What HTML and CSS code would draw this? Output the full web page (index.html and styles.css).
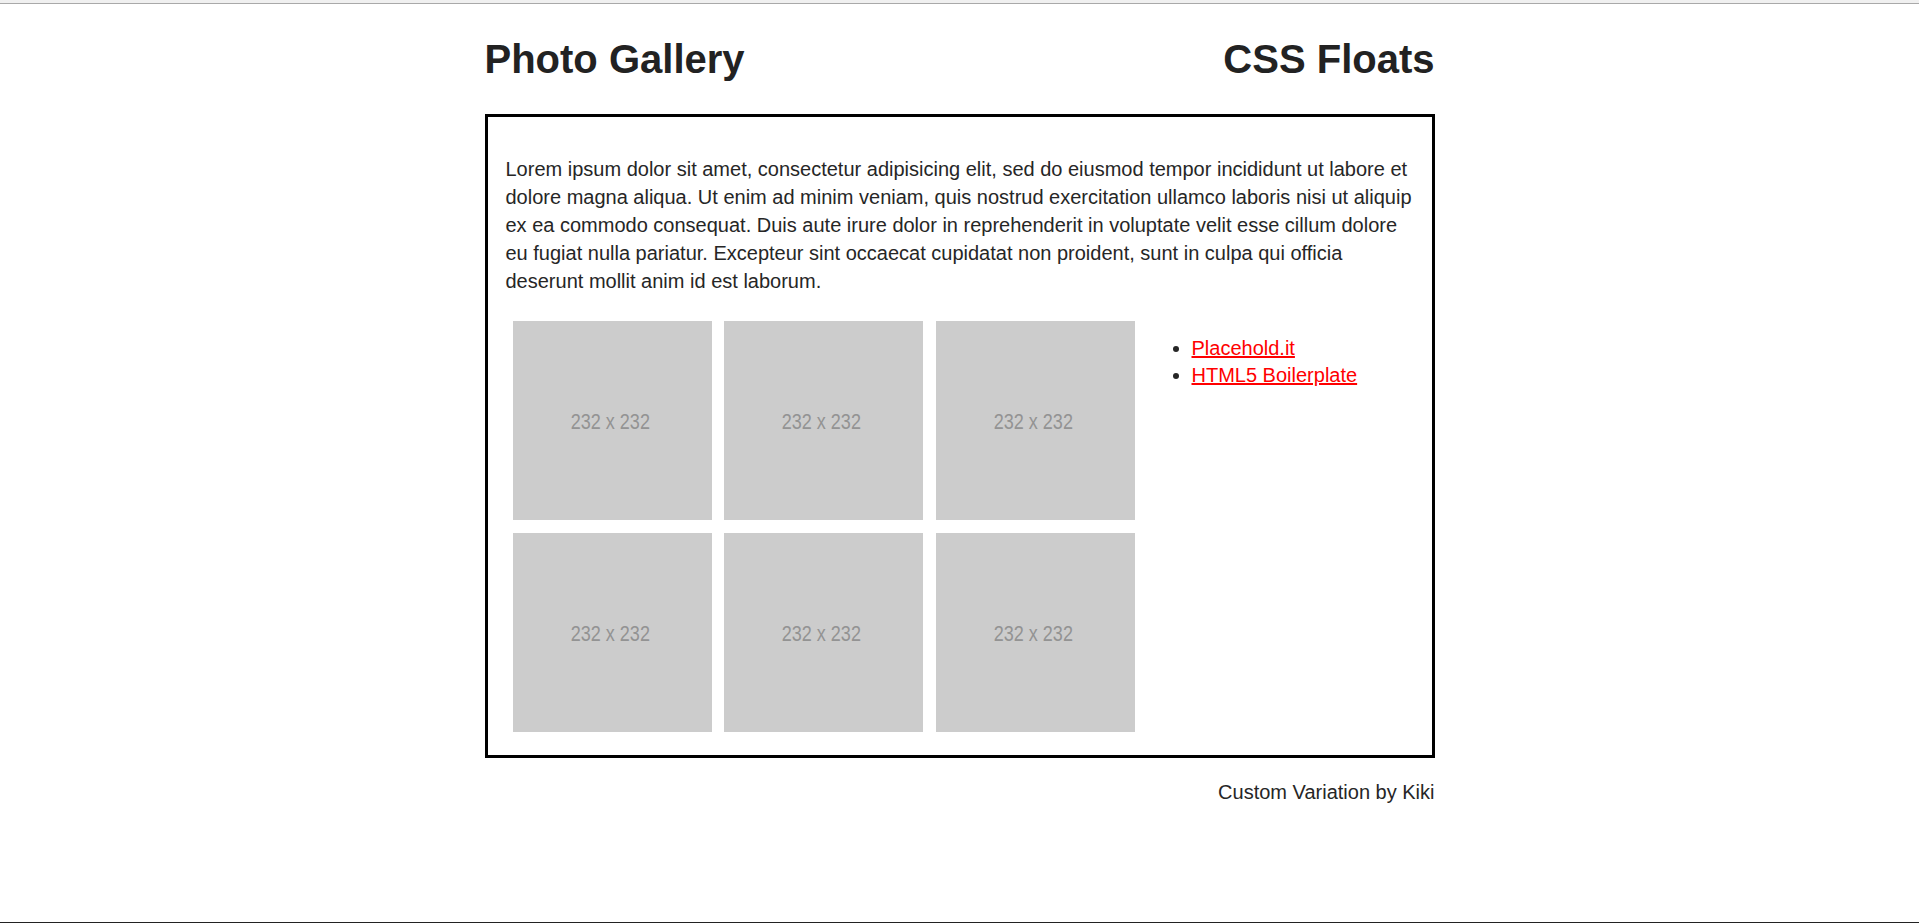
FILE: index.html
```html
<!DOCTYPE html>
<html lang="en">
<head>
<meta charset="utf-8">
<title>Photo Gallery - CSS Floats</title>
<link rel="stylesheet" href="styles.css">
</head>
<body>
<div class="topbar"></div>
<div class="container">
  <header class="header">
    <h1 class="title">Photo Gallery</h1>
    <h1 class="title">CSS Floats</h1>
  </header>
  <main class="box">
    <p class="intro">Lorem ipsum dolor sit amet, consectetur adipisicing elit, sed do eiusmod tempor incididunt ut labore et dolore magna aliqua. Ut enim ad minim veniam, quis nostrud exercitation ullamco laboris nisi ut aliquip ex ea commodo consequat. Duis aute irure dolor in reprehenderit in voluptate velit esse cillum dolore eu fugiat nulla pariatur. Excepteur sint occaecat cupidatat non proident, sunt in culpa qui officia deserunt mollit anim id est laborum.</p>
    <div class="content">
      <div class="gallery">
        <div class="photo"><span class="photo-label">232 x 232</span></div>
        <div class="photo"><span class="photo-label">232 x 232</span></div>
        <div class="photo"><span class="photo-label">232 x 232</span></div>
        <div class="photo"><span class="photo-label">232 x 232</span></div>
        <div class="photo"><span class="photo-label">232 x 232</span></div>
        <div class="photo"><span class="photo-label">232 x 232</span></div>
      </div>
      <aside class="sidebar">
        <ul class="links">
          <li><a href="#">Placehold.it</a></li>
          <li><a href="#">HTML5 Boilerplate</a></li>
        </ul>
      </aside>
    </div>
  </main>
  <footer class="footer">Custom Variation by Kiki</footer>
</div>
<div class="bottomline"></div>
</body>
</html>
```
FILE: styles.css
```css
html, body {
  margin: 0;
  padding: 0;
  background: #fff;
}

body {
  font-family: "Liberation Sans", Arial, sans-serif;
  font-size: 20px;
  line-height: 1.4;
  color: #262626;
}

.topbar {
  height: 3px;
  background: #f0f0f0;
  border-bottom: 1px solid #a9a9a9;
}

.container {
  width: 950px;
  margin: 0 auto;
}

.header {
  display: flex;
  justify-content: space-between;
  align-items: baseline;
  margin: 32px 0 32px;
}

.title {
  margin: 0;
  font-size: 40px;
  line-height: 46px;
  font-weight: bold;
  color: #222;
}

.box {
  display: block;
  border: 3px solid #000;
  padding: 18px;
}

.intro {
  margin: 20px 0 20px;
}

.content {
  display: flex;
  align-items: flex-start;
}

.gallery {
  display: grid;
  grid-template-columns: repeat(3, 199px);
  column-gap: 12.5px;
  row-gap: 13px;
  padding: 6px 0 5px 7px;
}

.photo {
  width: 199px;
  height: 199px;
  background: #cccccc;
  display: flex;
  align-items: center;
  justify-content: center;
}

.photo-label {
  display: inline-block;
  font-size: 22px;
  line-height: 1;
  color: #939393;
  transform: translate(-2px, 1px) scaleX(0.82);
  white-space: nowrap;
}

.sidebar {
  padding-left: 17px;
}

.links {
  margin: 20px 0 0;
  padding-left: 40px;
  line-height: 27px;
}

.links a {
  color: #ff0000;
  text-decoration: underline;
}

.footer {
  margin-top: 20px;
  text-align: right;
  line-height: 28px;
}

.bottomline {
  position: fixed;
  left: 0;
  right: 0;
  bottom: 0;
  height: 1px;
  background: #222;
}
```
